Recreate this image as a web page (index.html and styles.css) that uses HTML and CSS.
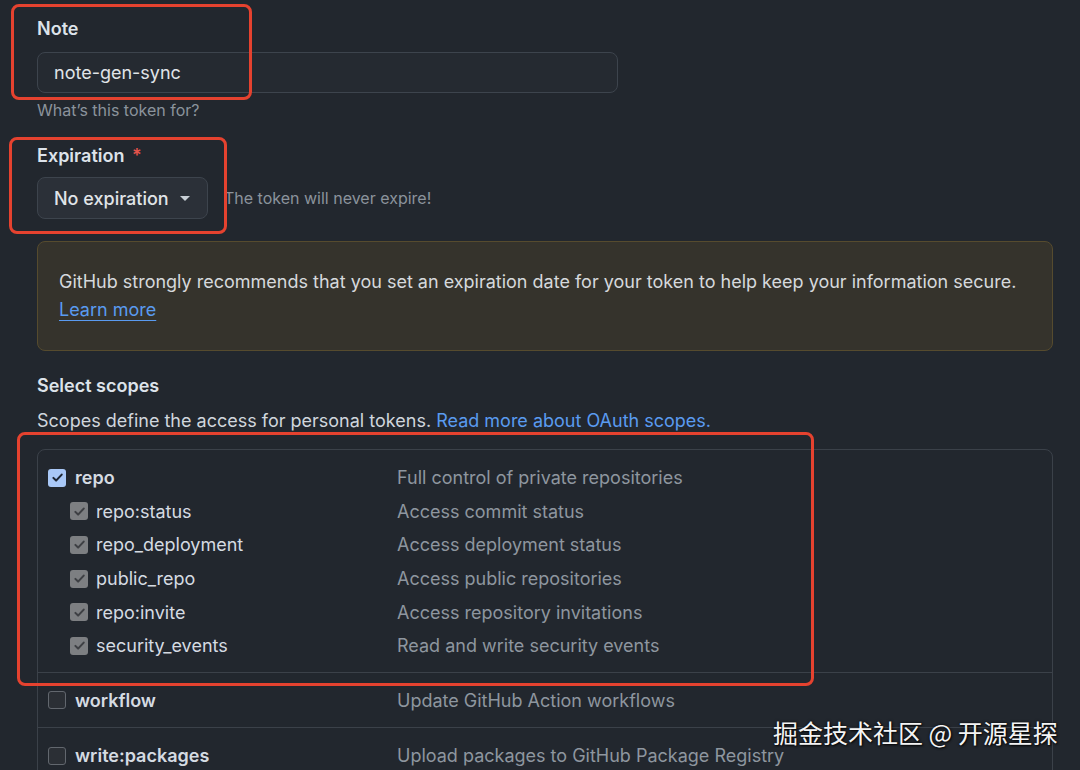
FILE: index.html
```html
<!DOCTYPE html>
<html lang="en">
<head>
<meta charset="utf-8">
<title>New personal access token</title>
<link rel="stylesheet" href="styles.css">
</head>
<body>
<div class="page">
  <div class="field">
    <div class="label">Note</div>
    <div class="input">note-gen-sync</div>
    <div class="hint">What’s this token for?</div>
  </div>

  <div class="field field-exp">
    <div class="label">Expiration <span class="req">*</span></div>
    <div class="select-row">
      <div class="select">No expiration <span class="caret"></span></div>
      <span class="exp-note">The token will never expire!</span>
    </div>
  </div>

  <div class="flash">
    <p>GitHub strongly recommends that you set an expiration date for your token to help keep your information secure.</p>
    <a class="learn">Learn more</a>
  </div>

  <div class="label scopes-title">Select scopes</div>
  <p class="scopes-desc">Scopes define the access for personal tokens. <a class="link">Read more about OAuth scopes.</a></p>

  <div class="scopes">
    <div class="group">
      <div class="row top">
        <span class="cb cb-on"><svg viewBox="0 0 16 16"><path d="M3.6 8.4l2.9 2.9 6-6.4"/></svg></span>
        <span class="name bold">repo</span>
        <span class="desc">Full control of private repositories</span>
      </div>
      <div class="row sub">
        <span class="cb cb-dis"><svg viewBox="0 0 16 16"><path d="M3.6 8.4l2.9 2.9 6-6.4"/></svg></span>
        <span class="name">repo:status</span>
        <span class="desc">Access commit status</span>
      </div>
      <div class="row sub">
        <span class="cb cb-dis"><svg viewBox="0 0 16 16"><path d="M3.6 8.4l2.9 2.9 6-6.4"/></svg></span>
        <span class="name">repo_deployment</span>
        <span class="desc">Access deployment status</span>
      </div>
      <div class="row sub">
        <span class="cb cb-dis"><svg viewBox="0 0 16 16"><path d="M3.6 8.4l2.9 2.9 6-6.4"/></svg></span>
        <span class="name">public_repo</span>
        <span class="desc">Access public repositories</span>
      </div>
      <div class="row sub">
        <span class="cb cb-dis"><svg viewBox="0 0 16 16"><path d="M3.6 8.4l2.9 2.9 6-6.4"/></svg></span>
        <span class="name">repo:invite</span>
        <span class="desc">Access repository invitations</span>
      </div>
      <div class="row sub">
        <span class="cb cb-dis"><svg viewBox="0 0 16 16"><path d="M3.6 8.4l2.9 2.9 6-6.4"/></svg></span>
        <span class="name">security_events</span>
        <span class="desc">Read and write security events</span>
      </div>
    </div>
    <div class="group single">
      <div class="row top">
        <span class="cb cb-off"></span>
        <span class="name bold">workflow</span>
        <span class="desc">Update GitHub Action workflows</span>
      </div>
    </div>
    <div class="group single">
      <div class="row top">
        <span class="cb cb-off"></span>
        <span class="name bold">write:packages</span>
        <span class="desc">Upload packages to GitHub Package Registry</span>
      </div>
    </div>
  </div>

  <div class="mark mark-note"></div>
  <div class="mark mark-exp"></div>
  <div class="mark mark-scopes"></div>
  <div class="watermark">掘金技术社区 @ 开源星探</div>
</div>
</body>
</html>
```

FILE: styles.css
```css
* { box-sizing: border-box; }
html, body { margin: 0; padding: 0; }
body {
  background: #22272e;
  color: #d3d9e0;
  font-family: Inter, "Noto Sans", "Liberation Sans", sans-serif;
  font-size: 18px;
  width: 1080px;
  height: 770px;
  overflow: hidden;
}
.page {
  position: relative;
  padding: 17px 0 0 37px;
  width: 1080px;
  height: 770px;
}
p { margin: 0; }
.label {
  font-weight: 600;
  font-size: 18px;
  line-height: 24px;
  color: #dde3ea;
}
.req { color: #e5534b; margin-left: 3px; }
.input {
  margin-top: 11px;
  width: 581px;
  height: 41px;
  border: 1px solid #3d444d;
  border-radius: 8px;
  background: #252a31;
  padding-left: 16px;
  line-height: 39px;
  color: #e0e4e8;
}
.hint {
  margin-top: 7px;
  font-size: 16px;
  line-height: 20px;
  color: #8b939c;
}
.field-exp { margin-top: 24px; }
.select-row {
  margin-top: 9px;
  display: flex;
  align-items: center;
  gap: 16px;
}
.select {
  width: 171px;
  height: 42px;
  border: 1px solid #3d444d;
  border-radius: 8px;
  background: #2b3038;
  padding-left: 16px;
  display: flex;
  align-items: center;
  font-weight: 500;
  color: #e0e4e8;
}
.caret {
  margin-left: 11px;
  width: 0; height: 0;
  border-left: 5px solid transparent;
  border-right: 5px solid transparent;
  border-top: 5px solid #c8cfd6;
}
.exp-note {
  font-size: 16px;
  color: #8b939c;
}
.flash {
  margin-top: 22px;
  width: 1016px;
  height: 110px;
  border: 1px solid #564b2e;
  border-radius: 8px;
  background: #35332c;
  padding: 26px 21px;
  line-height: 28px;
  color: #d6d9dc;
}
.learn, .link { color: #5a9bf0; }
.learn { text-decoration: underline; text-underline-offset: 4px; }
.scopes-title { margin-top: 23px; }
.scopes-desc { margin-top: 9px; line-height: 28px; color: #d0d6dd; }
.scopes {
  margin-top: 14px;
  width: 1016px;
  height: 400px;
  border: 1px solid #3b4149;
  border-radius: 8px 8px 0 0;
}
.group {
  padding: 11px 0 9px 10px;
  border-bottom: 1px solid #3b4149;
}
.group.single { padding: 11px 0 10px 10px; }
.row {
  display: flex;
  align-items: center;
  height: 33.6px;
}
.row.sub { padding-left: 22px; }
.cb {
  width: 18px; height: 18px;
  border-radius: 3px;
  flex: none;
  display: flex;
  align-items: center;
  justify-content: center;
}
.cb svg { width: 15px; height: 15px; fill: none; stroke-width: 2.2; stroke-linecap: round; stroke-linejoin: round; }
.cb-on { background: #a9c8f7; }
.cb-on svg { stroke: #1e2633; }
.cb-dis { background: #7d7f82; }
.cb-dis svg { stroke: #3e4044; }
.cb-off { background: #2b2f35; border: 1.5px solid #62676e; }
.name { margin-left: 9px; width: 300px; color: #d5dbe2; }
.row.sub .name { margin-left: 8px; width: 301px; }
.row.top .name { width: 322px; }
.bold { font-weight: 600; }
.desc { color: #8e969f; }
.mark {
  position: absolute;
  border: 3px solid #e5422f;
  border-radius: 8px;
}
.mark-note { left: 11px; top: 4px; width: 241px; height: 96px; }
.mark-exp { left: 9px; top: 137px; width: 218px; height: 97px; }
.mark-scopes { left: 17px; top: 432px; width: 797px; height: 254px; }
.watermark {
  position: absolute;
  left: 773px;
  top: 714px;
  font-family: "Noto Sans CJK SC", sans-serif;
  font-size: 25px;
  line-height: 36px;
  color: #f4f4f4;
  text-shadow: 0 0 3px rgba(0,0,0,0.8), 1px 1px 2px rgba(0,0,0,0.8);
  white-space: nowrap;
}
```
